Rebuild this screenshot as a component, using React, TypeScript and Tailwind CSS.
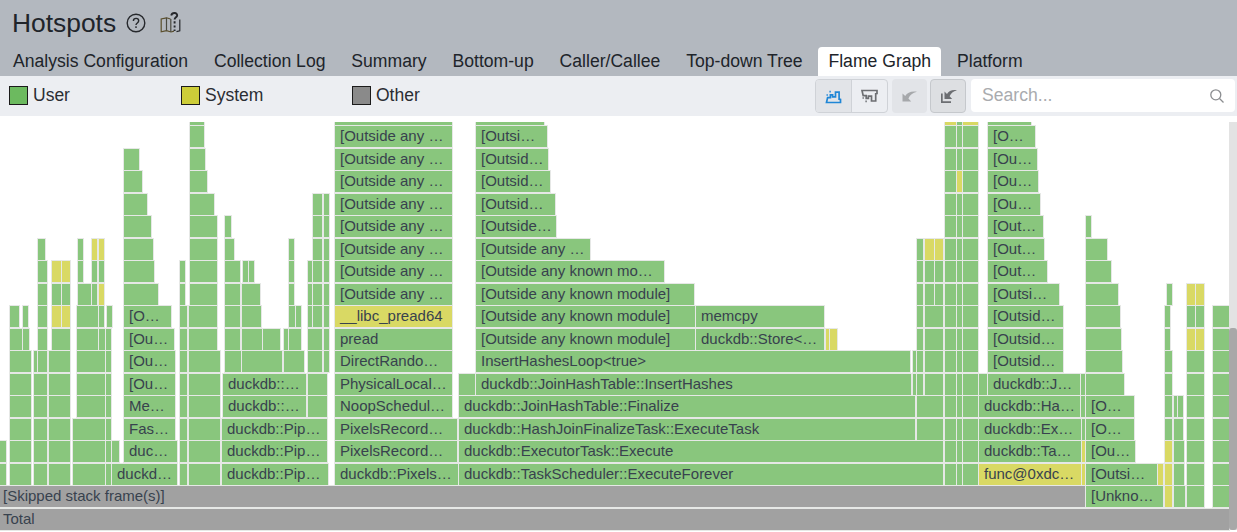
const G = 'g';
const Y = 'y';
const K = 'k';

type Seg = [number, number, string?, string?];

const OUT = '[Outside any …';
const KNOWN = '[Outside any known module]';

// col helpers for the stacks that repeat over many rows
const rightA: Seg[] = [[945, 956], [957, 962], [963, 978]];
const midB: Seg[] = [[917, 923], [925, 934], [935, 943]];
const midC: Seg[] = [[917, 923], [925, 943]];

const ROWS: Record<number, Seg[]> = {
  18: [[190, 204], [335, 452], [476, 544], [945, 956, '', Y], [957, 962], [963, 978, '', Y], [988, 1031]],
  17: [[190, 204], [335, 452, OUT], [476, 547, '[Outsi…'], ...rightA, [988, 1035, '[O…']],
  16: [[124, 139], [190, 205], [335, 452, OUT], [476, 548, '[Outsid…'], ...rightA, [988, 1037, '[Ou…']],
  15: [[124, 142], [190, 207], [335, 452, OUT], [476, 550, '[Outsid…'], [945, 956], [957, 962, '', Y], [963, 978], [988, 1038, '[Ou…']],
  14: [[124, 147], [190, 214], [313, 322], [324, 327], [335, 452, OUT], [476, 555, '[Outsid…'], ...rightA, [988, 1040, '[Ou…']],
  13: [[124, 151], [190, 217], [225, 231], [313, 322], [324, 327], [335, 452, OUT], [476, 556, '[Outside…'], ...rightA, [988, 1043, '[Out…'], [1086, 1090]],
  12: [[38, 45], [78, 82], [92, 96, '', Y], [99, 103, '', Y], [124, 153], [190, 217], [225, 234], [289, 293], [313, 322], [324, 327], [335, 452, OUT], [476, 590, OUT], [917, 923], [925, 934, '', Y], [935, 943, '', Y], ...rightA, [988, 1044, '[Out…'], [1086, 1107]],
  11: [[38, 47], [52, 61, '', Y], [62, 70, '', Y], [78, 82], [92, 97], [99, 103], [124, 154], [180, 184], [190, 217], [225, 240], [243, 248], [249, 252], [289, 293], [308, 311], [313, 322], [324, 327], [335, 452, OUT], [476, 664, '[Outside any known mo…'], ...midB, ...rightA, [988, 1047, '[Out…'], [1086, 1111]],
  10: [[38, 47], [52, 61], [62, 70], [78, 91], [92, 97], [99, 103, '', Y], [124, 158], [180, 184], [190, 217], [225, 240], [242, 260], [289, 293], [308, 311], [313, 322], [324, 327], [335, 452, OUT], [476, 694, KNOWN], ...midB, ...rightA, [988, 1059, '[Outsi…'], [1086, 1118], [1167, 1170], [1187, 1195, '', Y], [1196, 1204, '', Y]],
  9: [[10, 19], [23, 28], [38, 47], [52, 61, '', Y], [62, 70, '', Y], [77, 98], [99, 103], [107, 110], [124, 171, '[O…'], [180, 187], [189, 217], [225, 240], [242, 261], [289, 295], [296, 301], [308, 312], [313, 322], [324, 327], [335, 452, '__libc_pread64', Y], [476, 695, KNOWN], [696, 824, 'memcpy'], ...midC, ...rightA, [988, 1063, '[Outsid…'], [1086, 1120], [1165, 1170], [1187, 1195], [1196, 1204], [1213, 1229]],
  8: [[10, 22], [23, 29], [38, 47], [52, 70], [77, 98], [99, 105], [106, 110], [124, 174, '[Ou…'], [180, 187], [189, 217], [225, 240], [242, 262], [263, 280], [284, 288], [289, 301], [308, 322], [324, 327], [335, 452, 'pread'], [476, 695, KNOWN], [696, 824, 'duckdb::Store<…'], [826, 829, '', Y], [830, 837, '', Y], ...midC, ...rightA, [988, 1063, '[Outsid…'], [1086, 1121], [1165, 1170], [1187, 1195, '', Y], [1196, 1204, '', Y], [1213, 1229]],
  7: [[10, 31], [34, 37], [38, 47], [49, 70], [77, 105], [106, 110], [124, 175, '[Ou…'], [180, 187], [189, 220], [225, 241], [242, 282], [284, 304], [308, 322], [324, 327], [335, 452, 'DirectRando…'], [476, 910, 'InsertHashesLoop<true>'], [913, 915], ...midC, ...rightA, [988, 1063, '[Outsid…'], [1086, 1122], [1165, 1172], [1187, 1204], [1213, 1229]],
  6: [[10, 31], [34, 47], [49, 70], [77, 105], [106, 110], [124, 175, '[Ou…'], [180, 187], [189, 220], [223, 306, 'duckdb::…'], [308, 327], [335, 452, 'PhysicalLocal…'], [459, 475], [476, 911, 'duckdb::JoinHashTable::InsertHashes'], [913, 915], ...midC, ...rightA, [979, 987], [988, 1080, 'duckdb::J…'], [1081, 1084], [1086, 1124], [1165, 1172], [1187, 1204], [1213, 1229]],
  5: [[10, 31], [34, 47], [49, 70], [77, 105], [106, 110], [124, 175, 'Me…'], [180, 187], [189, 220], [223, 306, 'duckdb::…'], [308, 327], [335, 452, 'NoopSchedul…'], [459, 915, 'duckdb::JoinHashTable::Finalize'], [917, 943], ...rightA, [979, 1080, 'duckdb::Ha…'], [1081, 1084], [1086, 1134, '[O…'], [1165, 1172], [1174, 1176], [1178, 1181], [1187, 1204], [1213, 1229]],
  4: [[10, 31], [34, 47], [49, 70], [73, 105], [106, 110], [124, 175, 'Fas…'], [180, 187], [189, 220], [222, 327, 'duckdb::Pip…'], [335, 457, 'PixelsRecord…'], [459, 915, 'duckdb::HashJoinFinalizeTask::ExecuteTask'], [917, 943], ...rightA, [979, 1081, 'duckdb::Ex…'], [1082, 1084], [1086, 1134, '[O…'], [1165, 1172], [1174, 1183], [1187, 1204], [1213, 1229]],
  3: [[0, 6], [10, 31], [34, 47], [49, 70], [73, 105], [106, 110], [112, 119], [124, 177, 'duc…'], [180, 187], [189, 220], [222, 327, 'duckdb::Pip…'], [335, 457, 'PixelsRecord…'], [459, 943, 'duckdb::ExecutorTask::Execute'], ...rightA, [979, 1081, 'duckdb::Ta…'], [1082, 1085, '', Y], [1086, 1135, '[Ou…'], [1165, 1172, '', Y], [1174, 1184], [1187, 1204], [1213, 1229]],
  2: [[0, 6], [10, 31], [34, 47], [49, 70], [73, 105], [106, 110], [112, 177, 'duckd…'], [180, 187], [189, 220], [222, 328, 'duckdb::Pip…'], [335, 458, 'duckdb::Pixels…'], [459, 943, 'duckdb::TaskScheduler::ExecuteForever'], ...rightA, [979, 1081, 'func@0xdc…', Y], [1082, 1085, '', Y], [1086, 1157, '[Outsi…'], [1158, 1163, '', Y], [1165, 1172, '', Y], [1174, 1184], [1187, 1204], [1213, 1229]],
  1: [[-2, 1085, '[Skipped stack frame(s)]', K], [1086, 1163, '[Unkno…'], [1165, 1172, '', Y], [1174, 1185], [1187, 1204], [1213, 1229]],
  0: [[-2, 1229, 'Total', K]],
};

const FILL: Record<string, string> = {
  [G]: 'bg-[#89c67d]',
  [Y]: 'bg-[#d9d964]',
  [K]: 'bg-[#a1a1a1]',
};

function Bar({ seg, row }: { seg: Seg; row: number }) {
  const [x0, x1, label, tone] = seg;
  return (
    <div
      className={`absolute truncate border border-[#e6e8e6] pl-[5px] text-[15px] leading-[20px] text-[#38424e] ${FILL[tone ?? G]}`}
      style={{ left: x0 - 1, width: x1 - x0 + 2, top: 391.5 - 22.5 * row, height: 23 }}
    >
      {label}
    </div>
  );
}

function FlameChart() {
  const rows = Object.keys(ROWS).map(Number);
  return (
    <div className="relative h-[416px] overflow-hidden bg-white">
      <div className="absolute left-0 right-0 top-[6px] bottom-0 overflow-hidden">
        <div className="relative -mt-[6px] h-[416px]">
          {rows.map((r) => ROWS[r].map((seg) => <Bar key={`${r}-${seg[0]}`} seg={seg} row={r} />))}
        </div>
      </div>
      <div className="absolute bottom-[2px] right-0 top-[6px] w-[8px] bg-[#e3e3e3]">
        <div className="absolute bottom-0 left-0 top-[206px] w-full rounded-[3px] bg-[#a8a8a8]" />
      </div>
    </div>
  );
}

function HelpCircle() {
  return (
    <svg width="20" height="20" viewBox="0 0 20 20" fill="none" stroke="#26282c" strokeWidth="1.4">
      <circle cx="10" cy="10" r="8.8" />
      <path d="M7.4 8c0-1.6 1.2-2.6 2.7-2.6s2.6 1 2.6 2.4c0 2.2-2.7 2.1-2.7 4.2" />
      <path d="M10 13.3v1.6" />
    </svg>
  );
}

function BookHelp() {
  return (
    <svg width="21" height="21" viewBox="0 0 21 21" fill="none" stroke="#26282c" strokeWidth="1.2">
      <path d="M10.5 7 6.5 5.8 1.2 7v12.8l5.3-1.2 4.5 1.4 3-.8" stroke="#5b4f2c" />
      <path d="M6.5 5.8v12.8M10.8 7v13" stroke="#4a4a40" />
      <path d="M19.8 7.5v11.3l-3.3.9" />
      <path d="M11.2 3.4C11.7 1.6 13 .9 14.6 1c1.7.1 2.8 1.3 2.5 2.8-.3 1.5-2.5 1.8-2.5 3.8" strokeWidth="1.9" />
      <path d="M14.6 9.2v2.2M14.6 13.4v2.2M14.6 17.4v1.6" strokeWidth="1.9" />
    </svg>
  );
}

function Legend({ label, color, width }: { label: string; color: string; width: string }) {
  return (
    <div className={`flex items-center gap-[5px] pb-[1px] ${width}`}>
      <span className={`h-[19px] w-[19px] border border-[#1b1b1b] ${color}`} />
      <span className="text-[17.5px] text-[#2a2d33]">{label}</span>
    </div>
  );
}

const TABS = ['Analysis Configuration', 'Collection Log', 'Summary', 'Bottom-up', 'Caller/Callee', 'Top-down Tree', 'Flame Graph', 'Platform'];

function Tabs() {
  return (
    <div className="flex h-[29px] items-stretch pl-[3px] pr-0">
      {TABS.map((t) => (
        <div
          key={t}
          className={`mr-[5.9px] flex items-center px-[10px] text-[17.6px] text-[#20242a] ${t === 'Flame Graph' ? 'rounded-t-[4px] bg-white' : ''}`}
        >
          {t}
        </div>
      ))}
    </div>
  );
}

function Toolbar() {
  return (
    <div className="flex h-[40px] items-center bg-[#eceef2] pl-[9px] pr-[2px]">
      <Legend label="User" color="bg-[#6cba5f]" width="w-[172px]" />
      <Legend label="System" color="bg-[#cdcd39]" width="w-[171px]" />
      <Legend label="Other" color="bg-[#8a8a8a]" width="w-[200px]" />
      <div className="ml-auto flex items-center">
        <div className="flex h-[34px] w-[73px] overflow-hidden rounded-[4px] border border-[#cfd2d7]">
          <div className="flex w-[36px] items-center justify-center border-r border-[#cfd2d7] bg-[#e2e4e8]">
            <svg width="17" height="15" viewBox="0 0 17 15" fill="none" stroke="#1f86d6" strokeWidth="1.7">
              <path d="M1.5 13.5h14v-3l-1.4-.3V3.2h-3.6v4.6H7.6V5.8H5.4v2.8H2.6z" />
              <path d="M1.5 6h1.4M4.4 2.6h1.4" />
            </svg>
          </div>
          <div className="flex flex-1 items-center justify-center">
            <svg width="17" height="15" viewBox="0 0 17 15" fill="none" stroke="#6c6e72" strokeWidth="1.7">
              <path d="M1 1.5h15v3l-1.3.2V12h-4.2V7.2H7.4v2.2H5.2V6.6H2.2z" />
              <path d="M1.5 9h1.4M4.4 12.4h1.4" />
            </svg>
          </div>
        </div>
        <div className="ml-[4px] flex h-[34px] w-[35px] items-center justify-center rounded-[4px] bg-[#e2e4e8]">
          <svg width="18" height="15" viewBox="0 0 18 15" fill="#a6a8ab">
            <path d="M1.5 4.5 4.2 7C6.5 3.6 10 2 16 2.8 11.5 3.8 9 6 7.4 9.6l2.8 2.9H1.5z" />
          </svg>
        </div>
        <div className="ml-[3px] flex h-[34px] w-[36px] items-center justify-center rounded-[4px] border border-[#c5c8cc] bg-[#dddfe2]">
          <svg width="19" height="16" viewBox="0 0 19 16" fill="#6c6e72">
            <path d="M5.5 3.5 8 6c1.8-3 5-4.4 10-3.7-4 .9-6 2.9-7.4 6l2.6 2.7H5.5z" />
            <path d="M2 5.5V15h10v-1.7H3.7V5.5z" />
          </svg>
        </div>
        <div className="mb-[1px] ml-[5px] flex h-[33px] w-[264px] items-center justify-between rounded-[4px] bg-white pl-[11px] pr-[10px] text-[17.6px] text-[#a9abae]">
          <span>Search...</span>
          <svg width="16" height="16" viewBox="0 0 16 16" fill="none" stroke="#8b8d90" strokeWidth="1.3">
            <circle cx="6.8" cy="6.8" r="5" />
            <path d="m10.5 10.5 4 4" />
          </svg>
        </div>
      </div>
    </div>
  );
}

export default function App() {
  return (
    <div className="h-[532px] w-[1237px] overflow-hidden bg-white font-['Liberation_Sans',Arial,sans-serif]">
      <div className="h-[76px] bg-[#b3b8bf]">
        <div className="flex h-[47px] items-center pl-[12px]">
          <h1 className="text-[26.4px] font-normal text-[#20242a]">Hotspots</h1>
          <span className="mb-[2px] ml-[10px]"><HelpCircle /></span>
          <span className="mb-[2px] ml-[14px]"><BookHelp /></span>
        </div>
        <Tabs />
      </div>
      <Toolbar />
      <FlameChart />
    </div>
  );
}
